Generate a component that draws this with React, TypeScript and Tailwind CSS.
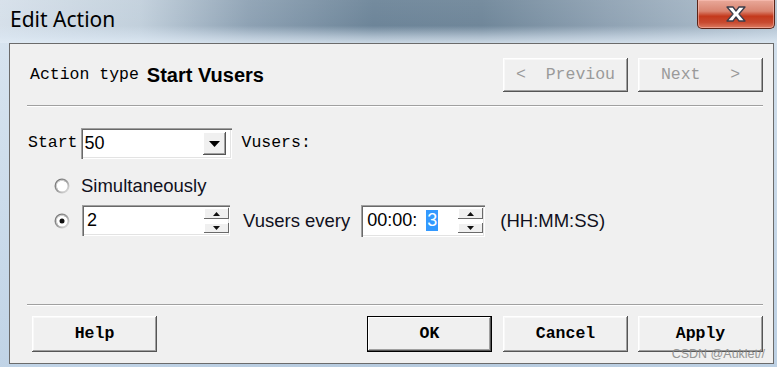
import React from "react";

const mono = { fontFamily: '"Liberation Mono", "DejaVu Sans Mono", monospace' };
const sans = { fontFamily: '"Liberation Sans", Arial, sans-serif' };

function RaisedButton({
  children,
  className = "",
  disabled = false,
  isDefault = false,
}: {
  children: React.ReactNode;
  className?: string;
  disabled?: boolean;
  isDefault?: boolean;
}) {
  return (
    <div
      className={
        "flex items-center justify-center bg-[#f0f0f0] " +
        (isDefault
          ? "border border-black shadow-[inset_-1px_-1px_0_#555555,inset_1px_1px_0_#ffffff,inset_-2px_-2px_0_#a0a0a0] "
          : "shadow-[inset_-1px_-1px_0_#555555,inset_1px_1px_0_#ffffff,inset_-2px_-2px_0_#a0a0a0,inset_2px_2px_0_#f8f8f8] ") +
        className
      }
    >
      <span
        style={mono}
        className={
          "text-[16.5px] leading-none whitespace-pre " +
          (disabled ? "text-[#9a9a9a]" : "text-black font-bold")
        }
      >
        {children}
      </span>
    </div>
  );
}

function Radio({ checked, id }: { checked?: boolean; id: string }) {
  return (
    <svg width="16" height="16" viewBox="0 0 16 16" className="shrink-0">
      <defs>
        <linearGradient id={id} x1="0" y1="0" x2="1" y2="1">
          <stop offset="0" stopColor="#5e5e5e" />
          <stop offset="0.5" stopColor="#9c9c9c" />
          <stop offset="1" stopColor="#f2f2f2" />
        </linearGradient>
      </defs>
      <circle cx="8" cy="8" r="7.5" fill={`url(#${id})`} />
      <circle cx="8" cy="8" r="5.6" fill="#ffffff" />
      <path d="M3.6 11.2 A5.4 5.4 0 0 1 11.2 3.6" stroke="#cfcfcf" strokeWidth="1.1" fill="none" />
      {checked && <circle cx="8" cy="8" r="2.5" fill="#111111" />}
    </svg>
  );
}

function SpinButtons() {
  return (
    <div className="flex flex-col gap-[4px] w-[25px] shrink-0">
      <div className="h-[11px] flex items-center justify-center bg-[#f0f0f0] shadow-[inset_-1px_-1px_0_#6a6a6a,inset_1px_1px_0_#ffffff]">
        <svg width="7" height="4" viewBox="0 0 7 4">
          <path d="M3.5 0 L7 4 L0 4 Z" fill="#111" />
        </svg>
      </div>
      <div className="h-[10px] flex items-center justify-center bg-[#f0f0f0] shadow-[inset_-1px_-1px_0_#6a6a6a,inset_1px_1px_0_#ffffff]">
        <svg width="7" height="4" viewBox="0 0 7 4">
          <path d="M0 0 L7 0 L3.5 4 Z" fill="#111" />
        </svg>
      </div>
    </div>
  );
}

export default function App() {
  return (
    <div className="relative w-[777px] h-[367px] overflow-hidden flex flex-col bg-[linear-gradient(90deg,#d6e0ea_0%,#c2d0dc_18%,#8ea2b4_32%,#6d8599_48%,#70879a_62%,#8fa2b3_78%,#b4c4d2_100%)]">
      {/* Title bar */}
      <div className="relative h-[43px] flex items-start shrink-0 bg-[linear-gradient(180deg,rgba(255,255,255,0.05)_0%,rgba(255,255,255,0)_60%,rgba(220,232,244,0.55)_85%,rgba(225,236,246,0.8)_100%)]">
        <span
          style={{ fontFamily: '"Noto Sans", "Open Sans", sans-serif' }}
          className="ml-[10px] mt-[5px] text-[21px] leading-[28px] text-black"
        >
          Edit Action
        </span>
        <div className="ml-auto mr-[2px] w-[78px] h-[29px] rounded-b-[5px] border border-t-0 border-[#5a2418] bg-[linear-gradient(180deg,#e9a99a_0%,#d98470_40%,#c4391c_58%,#c84a30_80%,#dc7a60_100%)] flex items-center justify-center shadow-[inset_0_0_0_1px_rgba(255,200,190,0.5)]">
          <svg width="26" height="18" viewBox="0 0 26 18">
            <path
              d="M4 2 L10 2 L13 6 L16 2 L22 2 L16 9 L22 16 L16 16 L13 12 L10 16 L4 16 L10 9 Z"
              fill="#ffffff"
              stroke="#3d3d4a"
              strokeWidth="1.3"
              strokeLinejoin="round"
            />
          </svg>
        </div>
      </div>

      {/* Frame + content panel */}
      <div className="flex-1 flex pl-[9px] pr-[3px] pb-[3px] bg-[linear-gradient(180deg,rgba(215,228,240,0.85),rgba(190,210,230,0.9))]">
        <div className="flex-1 flex flex-col bg-[#f0f0f0] border border-[#6b6b6b]">
          {/* Header row */}
          <div className="mt-[14px] h-[34px] flex items-center pl-[20px] pr-[10px]">
            <span style={mono} className="text-[16.5px] text-black whitespace-pre">
              Action type{" "}
            </span>
            <span style={sans} className="text-[20px] font-bold text-black ml-[-2px]">
              Start Vusers
            </span>
            <div className="ml-auto flex gap-[10px]">
              <RaisedButton disabled className="w-[125px] h-[34px]">
                {"<  Previou"}
              </RaisedButton>
              <RaisedButton disabled className="w-[125px] h-[34px]">
                {"Next   >"}
              </RaisedButton>
            </div>
          </div>

          {/* Separator */}
          <div className="mt-[13px] ml-[17px] mr-[10px] h-[2px] border-t border-[#a0a0a0] border-b border-b-white" />

          {/* Start row */}
          <div className="mt-[21px] h-[31px] flex items-center pl-[18px]">
            <span style={mono} className="text-[16.5px] text-black">
              Start
            </span>
            <div className="ml-[3px] w-[151px] h-[31px] bg-white flex items-center shadow-[inset_1px_1px_0_#a0a0a0,inset_2px_2px_0_#696969,inset_-1px_-1px_0_#ffffff,inset_-2px_-2px_0_#e3e3e3]">
              <span style={sans} className="ml-[4px] text-[18px] text-black">
                50
              </span>
              <div className="ml-auto mr-[6px] w-[23px] h-[23px] flex items-center justify-center bg-[#f0f0f0] shadow-[inset_-1px_-1px_0_#555555,inset_1px_1px_0_#ffffff,inset_-2px_-2px_0_#a0a0a0]">
                <svg width="11" height="6" viewBox="0 0 11 6">
                  <path d="M0 0 L11 0 L5.5 6 Z" fill="#000" />
                </svg>
              </div>
            </div>
            <span style={mono} className="ml-[10px] text-[16.5px] text-black">
              Vusers:
            </span>
          </div>

          {/* Simultaneously */}
          <div className="mt-[17px] h-[20px] flex items-center pl-[44px]">
            <Radio id="r1" />
            <span style={sans} className="ml-[11px] text-[18.5px] text-[#101020]">
              Simultaneously
            </span>
          </div>

          {/* Every row */}
          <div className="mt-[9px] h-[31px] flex items-center pl-[44px]">
            <Radio id="r2" checked />
            <div className="ml-[12px] w-[148px] h-[31px] bg-white flex items-center shadow-[inset_1px_1px_0_#a0a0a0,inset_2px_2px_0_#696969,inset_-1px_-1px_0_#ffffff,inset_-2px_-2px_0_#e3e3e3]">
              <span style={sans} className="ml-[5px] text-[18px] text-black">
                2
              </span>
              <div className="ml-auto mr-[1px]">
                <SpinButtons />
              </div>
            </div>
            <span style={sans} className="ml-[13px] text-[18.5px] text-[#101020]">
              Vusers every
            </span>
            <div className="ml-[11px] w-[124px] h-[32px] bg-white flex items-center shadow-[inset_1px_1px_0_#a0a0a0,inset_2px_2px_0_#696969,inset_-1px_-1px_0_#ffffff,inset_-2px_-2px_0_#e3e3e3]">
              <span style={sans} className="ml-[6px] text-[18px] text-black whitespace-pre">
                00:00:
              </span>
              <span style={sans} className="ml-[9px] bg-[#3399ff] text-white text-[18px] leading-[21px] px-[1px]">
                3
              </span>
              <div className="ml-auto mr-[2px]">
                <SpinButtons />
              </div>
            </div>
            <span style={sans} className="ml-[15px] text-[18.5px] text-[#101020]">
              (HH:MM:SS)
            </span>
          </div>

          {/* Spacer */}
          <div className="flex-1" />

          {/* Separator */}
          <div className="ml-[17px] mr-[10px] h-[2px] border-t border-[#a0a0a0] border-b border-b-white" />

          {/* Bottom buttons */}
          <div className="mt-[10px] mb-[11px] flex items-center pl-[22px] pr-[10px]">
            <RaisedButton className="w-[125px] h-[36px]">Help</RaisedButton>
            <div className="flex-1" />
            <RaisedButton isDefault className="w-[125px] h-[36px]">
              OK
            </RaisedButton>
            <RaisedButton className="ml-[11px] w-[125px] h-[36px]">Cancel</RaisedButton>
            <RaisedButton className="ml-[10px] w-[125px] h-[36px]">Apply</RaisedButton>
          </div>
        </div>
      </div>

      {/* Watermark */}
      <span
        style={sans}
        className="absolute right-[12px] bottom-[7px] text-[12.5px] leading-none text-[#8a8a8a] opacity-90"
      >
        CSDN @Auklet//
      </span>
    </div>
  );
}
